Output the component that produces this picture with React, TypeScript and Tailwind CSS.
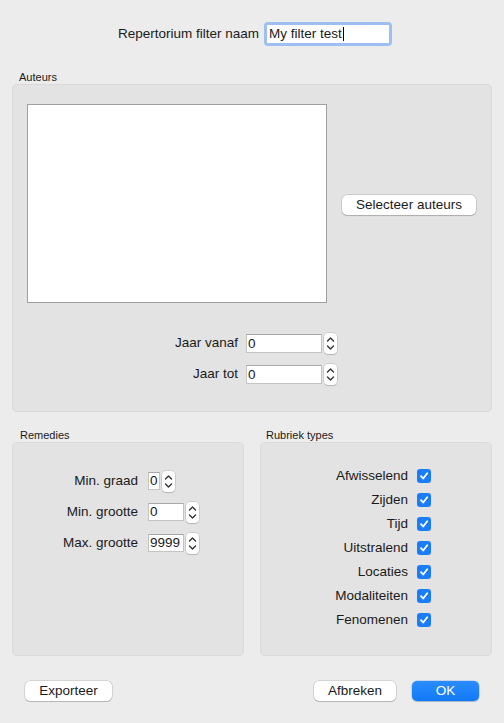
import React from "react";

const font = "font-['Liberation_Sans',Arial,sans-serif]";

function Stepper() {
  return (
    <div className="ml-[2px] flex h-[21px] w-[13px] flex-col items-center justify-center rounded-[4px] bg-white shadow-[0_0_0_0.5px_rgba(0,0,0,0.18),0_1px_1px_rgba(0,0,0,0.12)]">
      <svg width="9" height="17" viewBox="0 0 9 17" fill="none" stroke="#333" strokeWidth="1.4" strokeLinecap="round" strokeLinejoin="round">
        <path d="M1.5 6 L4.5 3 L7.5 6" />
        <path d="M1.5 11 L4.5 14 L7.5 11" />
      </svg>
    </div>
  );
}

function NumField({ value, w }: { value: string; w: string }) {
  return (
    <div className="flex items-center">
      <div className={`${w} flex h-[18px] items-center border border-[#c4c4c4] border-t-[#a8a8a8] bg-white pl-[1px] text-[13.5px] leading-none text-[#1a1a1a]`}>
        {value}
      </div>
      <Stepper />
    </div>
  );
}

function Check() {
  return (
    <div className="flex h-[14px] w-[14px] items-center justify-center rounded-[3px] bg-[#1a7df6]">
      <svg width="10" height="10" viewBox="0 0 10 10" fill="none" stroke="white" strokeWidth="1.8" strokeLinecap="round" strokeLinejoin="round">
        <path d="M2 5.2 L4.2 7.5 L8.2 2.3" />
      </svg>
    </div>
  );
}

function Btn({ children, className = "" }: { children: React.ReactNode; className?: string }) {
  return (
    <div className={`flex h-[20px] items-center justify-center rounded-[5px] bg-white text-[13.5px] text-[#1a1a1a] shadow-[0_0_0_0.5px_rgba(0,0,0,0.2),0_1px_1px_rgba(0,0,0,0.15)] ${className}`}>
      {children}
    </div>
  );
}

const rubrieken = ["Afwisselend", "Zijden", "Tijd", "Uitstralend", "Locaties", "Modaliteiten", "Fenomenen"];

export default function App() {
  return (
    <div className={`${font} flex h-[723px] w-[504px] flex-col bg-[#ececec] text-[#1a1a1a]`}>
      <div className="mt-[22px] flex h-[24px] items-center pl-[118px]">
        <span className="text-[13.5px]">Repertorium filter naam</span>
        <div className="ml-[5px] flex h-[24px] w-[128px] items-center rounded-[4px] bg-[#9dbff2] p-[3px]">
          <div className="flex h-full w-full items-center bg-white pl-[2px] text-[13.5px]">
            My filter test<span className="ml-[1px] inline-block h-[14px] w-[1px] bg-black" />
          </div>
        </div>
      </div>

      <div className="ml-[19px] mt-[25px] h-[13px] text-[11px] leading-[13px]">Auteurs</div>
      <div className="mx-3 h-[328px] rounded-[5px] border border-[#dadada] bg-[#e3e3e3] pl-[14px] pt-[19px]">
        <div className="flex items-center">
          <div className="h-[199px] w-[300px] border border-[#a0a0a0] bg-white" />
          <Btn className="ml-[15px] mt-[3px] w-[134px]">Selecteer auteurs</Btn>
        </div>
        <div className="mt-[31px] flex flex-col gap-[12px]">
          {["Jaar vanaf", "Jaar tot"].map((l) => (
            <div key={l} className="flex h-[19px] items-center">
              <span className="w-[219px] pr-[8px] text-right text-[13.5px]">{l}</span>
              <NumField value="0" w="w-[76px] h-[19px]" />
            </div>
          ))}
        </div>
      </div>

      <div className="mx-3 mt-[17px] flex gap-[16px]">
        <div className="flex w-[232px] flex-col">
          <div className="ml-[8px] h-[13px] text-[11px] leading-[13px]">Remedies</div>
          <div className="h-[214px] rounded-[5px] border border-[#dadada] bg-[#e3e3e3] pt-[29px]">
            <div className="flex flex-col gap-[13px]">
              {[
                ["Min. graad", "0", "w-[12px]"],
                ["Min. grootte", "0", "w-[36px]"],
                ["Max. grootte", "9999", "w-[36px]"],
              ].map(([l, v, w]) => (
                <div key={l} className="flex h-[18px] items-center">
                  <span className="w-[135px] pr-[10px] text-right text-[13.5px]">{l}</span>
                  <NumField value={v} w={w} />
                </div>
              ))}
            </div>
          </div>
        </div>
        <div className="flex w-[232px] flex-col">
          <div className="ml-[6px] h-[13px] text-[11px] leading-[13px]">Rubriek types</div>
          <div className="h-[214px] rounded-[5px] border border-[#dadada] bg-[#e3e3e3] pt-[21px]">
            <div className="flex flex-col">
              {rubrieken.map((r) => (
                <div key={r} className="flex h-[24px] items-center">
                  <span className="w-[156px] pr-[9px] text-right text-[13.5px]">{r}</span>
                  <Check />
                </div>
              ))}
            </div>
          </div>
        </div>
      </div>

      <div className="mt-[25px] flex items-center pl-[25px]">
        <Btn className="w-[87px]">Exporteer</Btn>
        <Btn className="ml-[202px] w-[82px]">Afbreken</Btn>
        <div className="ml-[16px] flex h-[20px] w-[67px] items-center justify-center rounded-[5px] bg-gradient-to-b from-[#2a8dfd] to-[#0f79f7] text-[13.5px] text-white shadow-[0_0_0_0.5px_rgba(0,80,200,0.3),0_1px_1px_rgba(0,0,0,0.15)]">
          OK
        </div>
      </div>
    </div>
  );
}
